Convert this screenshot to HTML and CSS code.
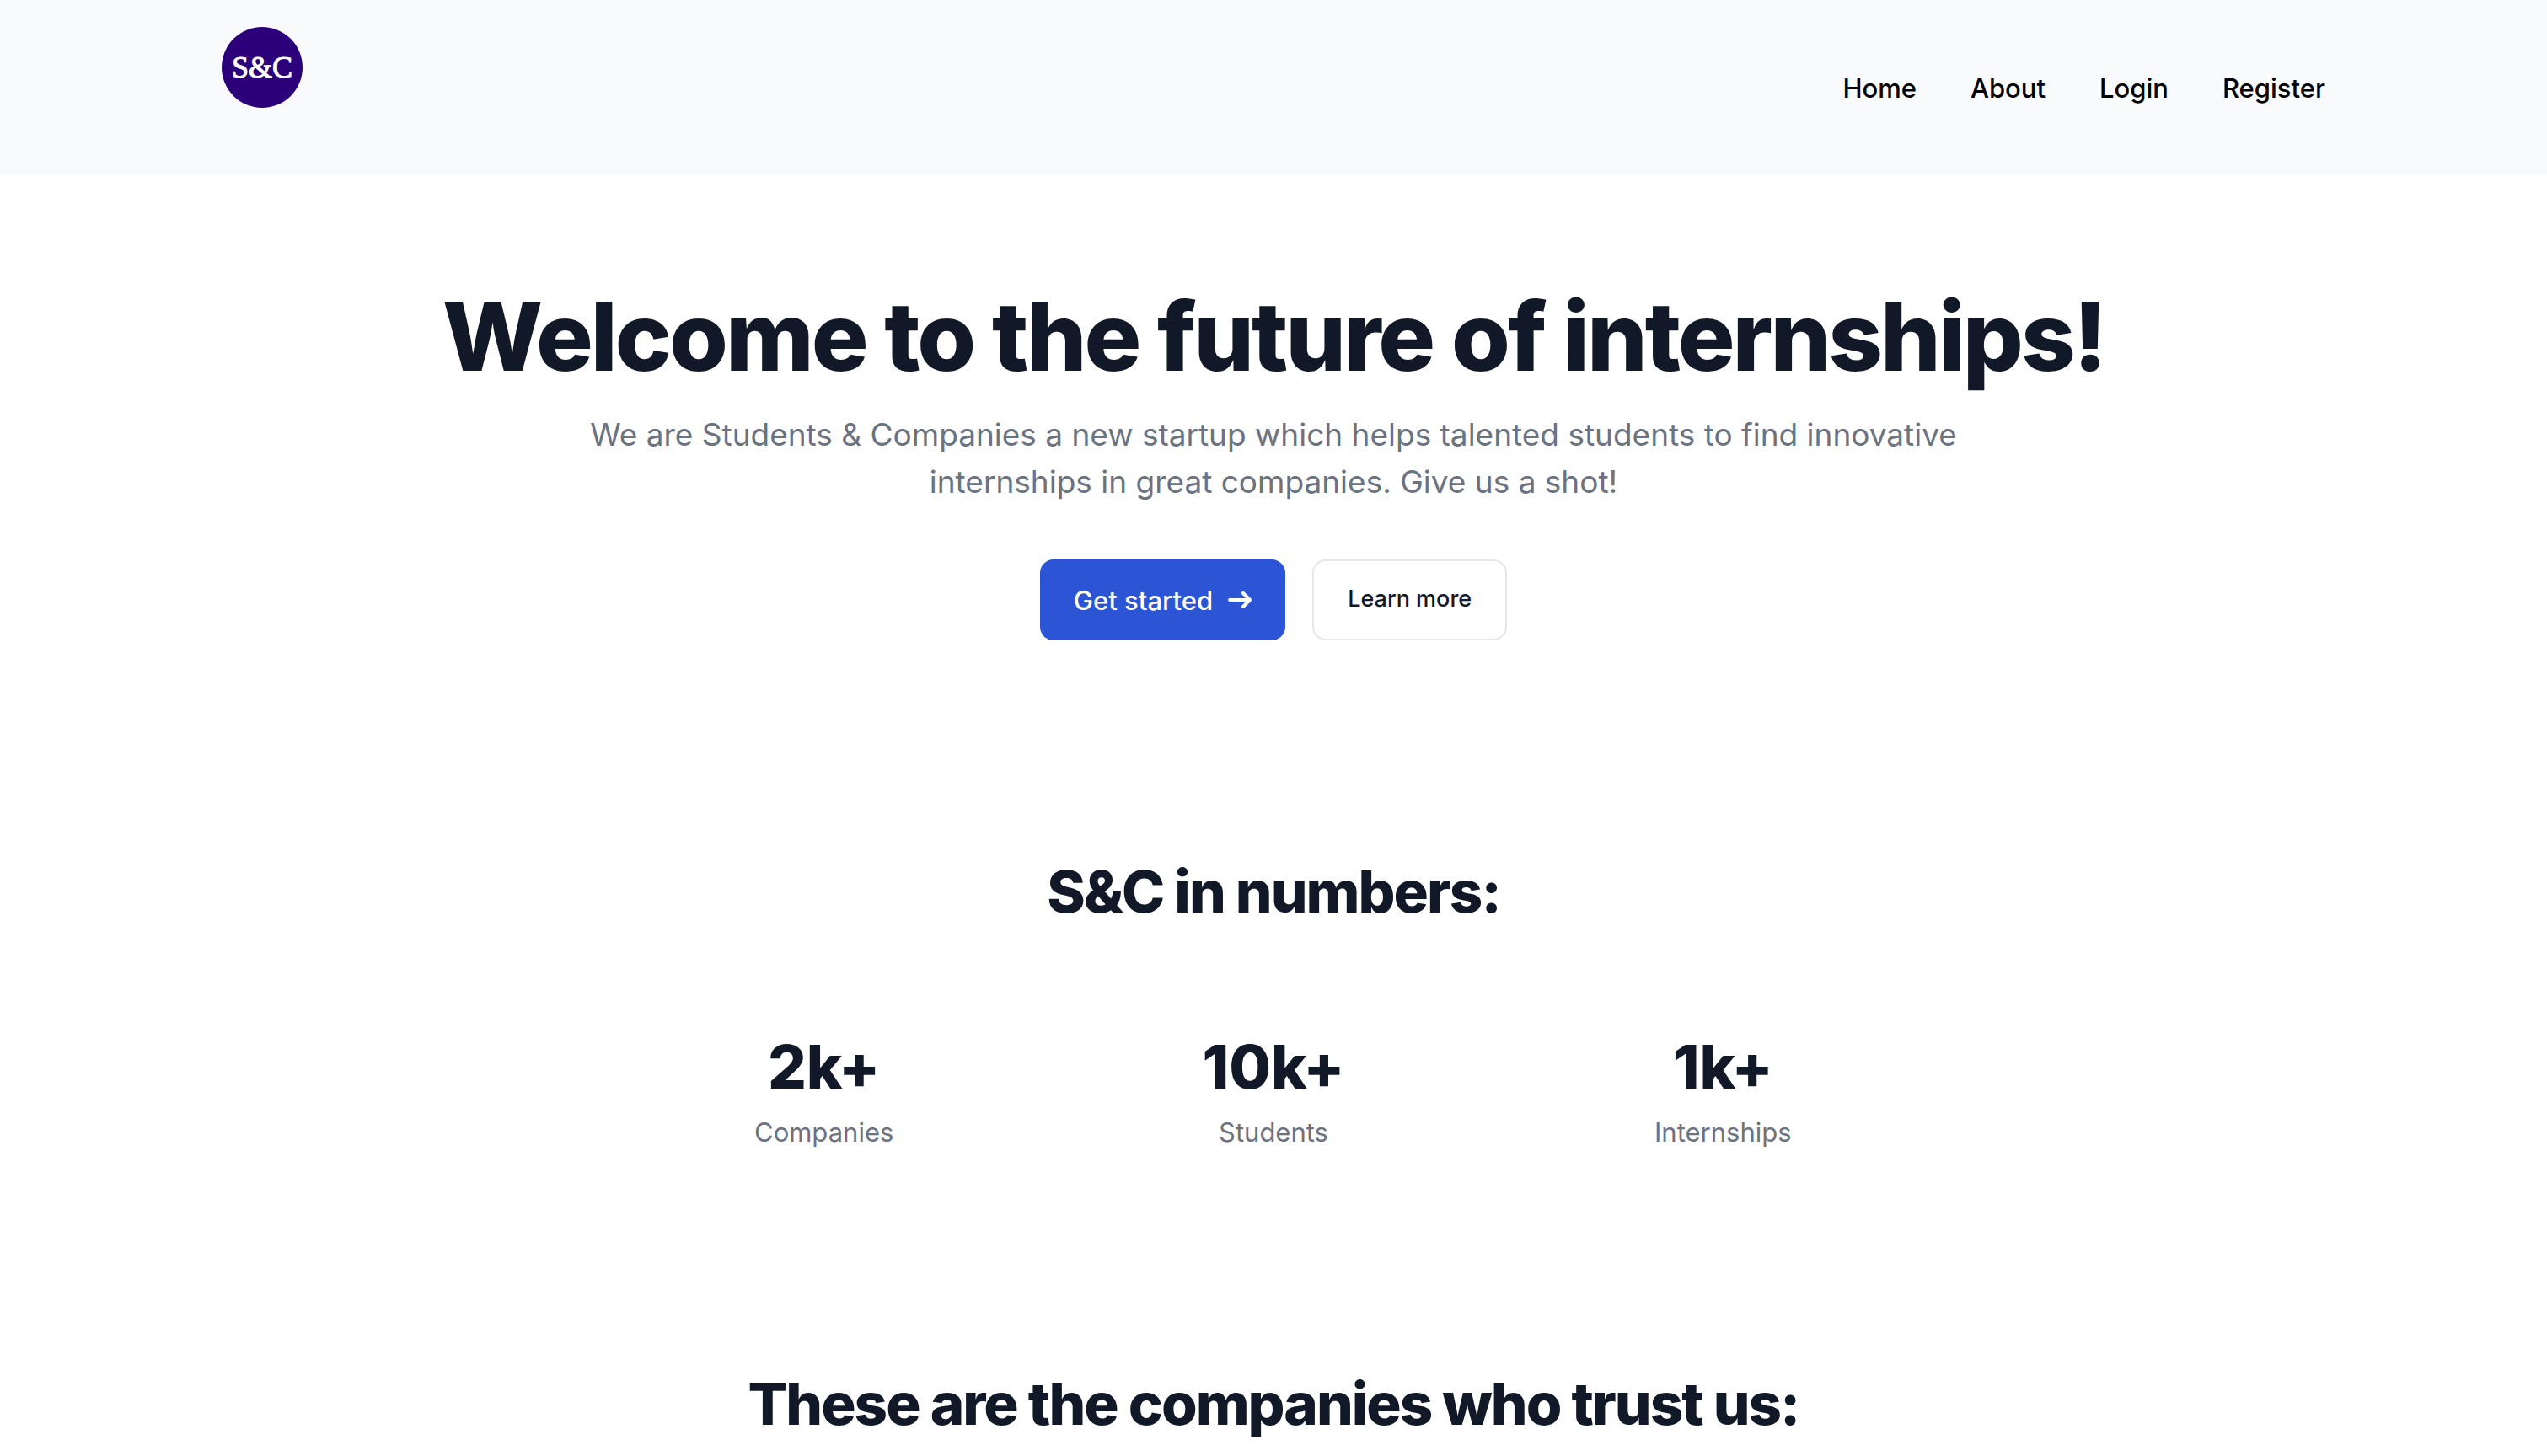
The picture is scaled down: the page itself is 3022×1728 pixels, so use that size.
FILE: index.html
```html
<!DOCTYPE html>
<html lang="en">
<head>
  <meta charset="utf-8">
  <meta name="viewport" content="width=device-width, initial-scale=1">
  <title>Students &amp; Companies</title>
  <link rel="stylesheet" href="styles.css">
</head>
<body>
  <header class="site-header">
    <div class="header-inner">
      <a class="logo" href="#" aria-label="Students &amp; Companies">
        <svg viewBox="0 0 96 96" aria-hidden="true">
          <circle cx="48" cy="48" r="48" fill="#2b0078"/>
          <text class="logo-text" x="48" y="60" text-anchor="middle">S&amp;C</text>
        </svg>
      </a>
      <nav class="nav">
        <a href="#">Home</a>
        <a href="#">About</a>
        <a href="#">Login</a>
        <a href="#">Register</a>
      </nav>
    </div>
  </header>
  <main>
    <section class="hero">
      <h1>Welcome to the future of internships!</h1>
      <p class="lead">We are Students &amp; Companies a new startup which helps talented students to find innovative internships in great companies. Give us a shot!</p>
      <div class="actions">
        <button class="button button-primary" type="button">
          Get started
          <svg class="arrow" viewBox="0 0 28 20" fill="none" stroke="currentColor" stroke-width="4" stroke-linecap="round" stroke-linejoin="round" aria-hidden="true"><path d="M2 10H26M18 2l8 8-8 8"/></svg>
        </button>
        <button class="button button-outline" type="button">Learn more</button>
      </div>
    </section>
    <section class="numbers">
      <h2>S&amp;C in numbers:</h2>
      <dl class="stats">
        <div class="stat"><dt>Companies</dt><dd>2k+</dd></div>
        <div class="stat"><dt>Students</dt><dd>10k+</dd></div>
        <div class="stat"><dt>Internships</dt><dd>1k+</dd></div>
      </dl>
    </section>
    <section class="partners">
      <h2>These are the companies who trust us:</h2>
    </section>
  </main>
</body>
</html>
```
FILE: styles.css
```css
* {
  box-sizing: border-box;
}

body {
  margin: 0;
  background: #fff;
  color: #111827;
  font-family: Inter, "Liberation Sans", sans-serif;
}

h1, h2, p, dl, dd {
  margin: 0;
}

.site-header {
  background: #f9fafc;
}

.header-inner {
  display: flex;
  justify-content: space-between;
  max-width: 2560px;
  margin: 0 auto;
  padding: 32px 32px 78px;
}

.logo {
  display: block;
  width: 96px;
  height: 96px;
}

.logo svg {
  display: block;
  width: 100%;
}

.logo-text {
  font: 400 36px "Liberation Serif", serif;
  fill: #fff;
  stroke: #fff;
  stroke-width: 1px;
}

.nav {
  display: flex;
  gap: 64px;
  padding-top: 48px;
}

.nav a {
  color: #000;
  font-size: 31px;
  font-weight: 500;
  line-height: 50px;
  text-decoration: none;
}

.hero {
  display: flex;
  flex-direction: column;
  align-items: center;
  padding: 128px 64px;
  text-align: center;
}

h1 {
  margin-bottom: 26px;
  font-size: 113px;
  font-weight: 800;
  line-height: 126px;
  letter-spacing: -3px;
}

.lead {
  max-width: 1680px;
  margin-bottom: 64px;
  color: #6b7280;
  font-size: 37px;
  line-height: 56px;
}

.actions {
  display: flex;
  gap: 32px;
}

.button {
  display: flex;
  align-items: center;
  gap: 18px;
  height: 96px;
  padding: 0 40px;
  border: 2px solid transparent;
  border-radius: 16px;
  font-family: inherit;
  font-weight: 500;
}

.button-primary {
  border: 0;
  background: #2b55d4;
  color: #fff;
  font-size: 31px;
}

.arrow {
  width: 28px;
  height: 20px;
}

.button-outline {
  padding-bottom: 4px;
  border-color: #e5e7eb;
  background: #fff;
  color: #111827;
  font-size: 27px;
}

h2 {
  font-size: 69px;
  font-weight: 800;
  line-height: 84px;
  letter-spacing: -2px;
  text-align: center;
}

.numbers {
  padding: 128px 64px;
}

.stats {
  display: grid;
  grid-template-columns: repeat(3, 1fr);
  max-width: 1600px;
  margin: 0 auto;
  padding-top: 124px;
}

.stat {
  display: flex;
  flex-direction: column-reverse;
  gap: 12px;
  text-align: center;
}

.stat dt {
  color: #6b7280;
  font-size: 31px;
  line-height: 48px;
}

.stat dd {
  font-size: 72px;
  font-weight: 800;
  line-height: 84px;
}

.partners {
  padding: 128px 64px 0;
}
```
